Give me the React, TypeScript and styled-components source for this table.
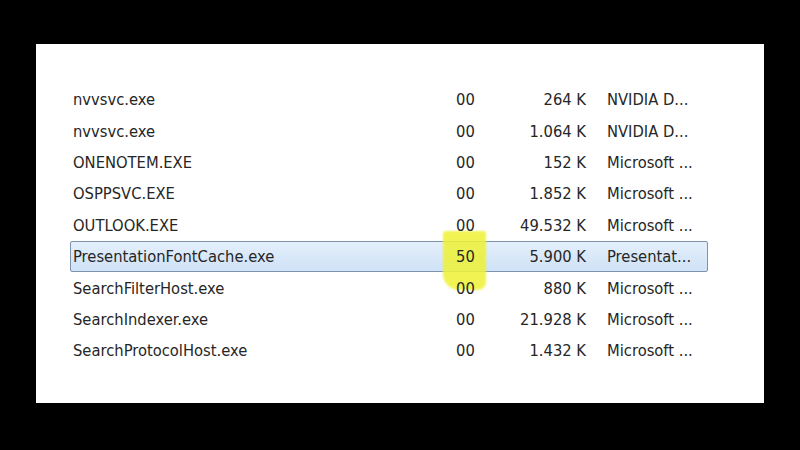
import React from "react";
import styled, { createGlobalStyle } from "styled-components";

const Global = createGlobalStyle`
  html, body { margin: 0; padding: 0; background: #000; }
  body { width: 800px; height: 450px; overflow: hidden; }
`;

const Screen = styled.div`
  width: 800px;
  height: 450px;
  background: #000;
  padding: 44px 36px 47px 36px;
  box-sizing: border-box;
`;

const Panel = styled.div`
  width: 728px;
  height: 359px;
  background: #fff;
  box-sizing: border-box;
  padding: 40px 0 0 34px;
  display: flex;
  flex-direction: column;
`;

const Row = styled.div<{ $selected?: boolean }>`
  position: relative;
  width: 638px;
  height: 31.4px;
  box-sizing: border-box;
  display: grid;
  grid-template-columns: 383px 40px 90px 21px 1fr;
  align-items: center;
  padding-left: 2px;
  font-family: "DejaVu Sans Condensed", "DejaVu Sans", sans-serif;
  font-stretch: condensed;
  font-size: 16.4px;
  color: #262626;
  border: 1px solid ${(p) => (p.$selected ? "#7f93ad" : "transparent")};
  border-radius: 2px;
  background: ${(p) =>
    p.$selected ? "linear-gradient(#e4effb, #cfe2f7)" : "transparent"};
`;

const Name = styled.span`
  white-space: nowrap;
`;

const Cpu = styled.span`
  position: relative;
  z-index: 3;
`;

const Mem = styled.span`
  text-align: right;
  white-space: nowrap;
`;

const Desc = styled.span`
  grid-column: 5;
  white-space: nowrap;
`;

const Marker = styled.div`
  position: absolute;
  left: 372px;
  top: -11px;
  width: 43px;
  height: 59px;
  background: #eef23a;
  border-radius: 3px 2px 8px 16px;
  filter: blur(1.2px);
  opacity: 0.88;
  z-index: 2;
`;

type Proc = { name: string; cpu: string; mem: string; desc: string; sel?: boolean };

const procs: Proc[] = [
  { name: "nvvsvc.exe", cpu: "00", mem: "264 K", desc: "NVIDIA D..." },
  { name: "nvvsvc.exe", cpu: "00", mem: "1.064 K", desc: "NVIDIA D..." },
  { name: "ONENOTEM.EXE", cpu: "00", mem: "152 K", desc: "Microsoft ..." },
  { name: "OSPPSVC.EXE", cpu: "00", mem: "1.852 K", desc: "Microsoft ..." },
  { name: "OUTLOOK.EXE", cpu: "00", mem: "49.532 K", desc: "Microsoft ..." },
  { name: "PresentationFontCache.exe", cpu: "50", mem: "5.900 K", desc: "Presentat...", sel: true },
  { name: "SearchFilterHost.exe", cpu: "00", mem: "880 K", desc: "Microsoft ..." },
  { name: "SearchIndexer.exe", cpu: "00", mem: "21.928 K", desc: "Microsoft ..." },
  { name: "SearchProtocolHost.exe", cpu: "00", mem: "1.432 K", desc: "Microsoft ..." },
];

export default function App() {
  return (
    <>
      <Global />
      <Screen>
        <Panel>
          {procs.map((p, i) => (
            <Row key={i} $selected={p.sel}>
              <Name>{p.name}</Name>
              <Cpu>{p.cpu}</Cpu>
              <Mem>{p.mem}</Mem>
              <Desc>{p.desc}</Desc>
              {p.sel && <Marker />}
            </Row>
          ))}
        </Panel>
      </Screen>
    </>
  );
}
